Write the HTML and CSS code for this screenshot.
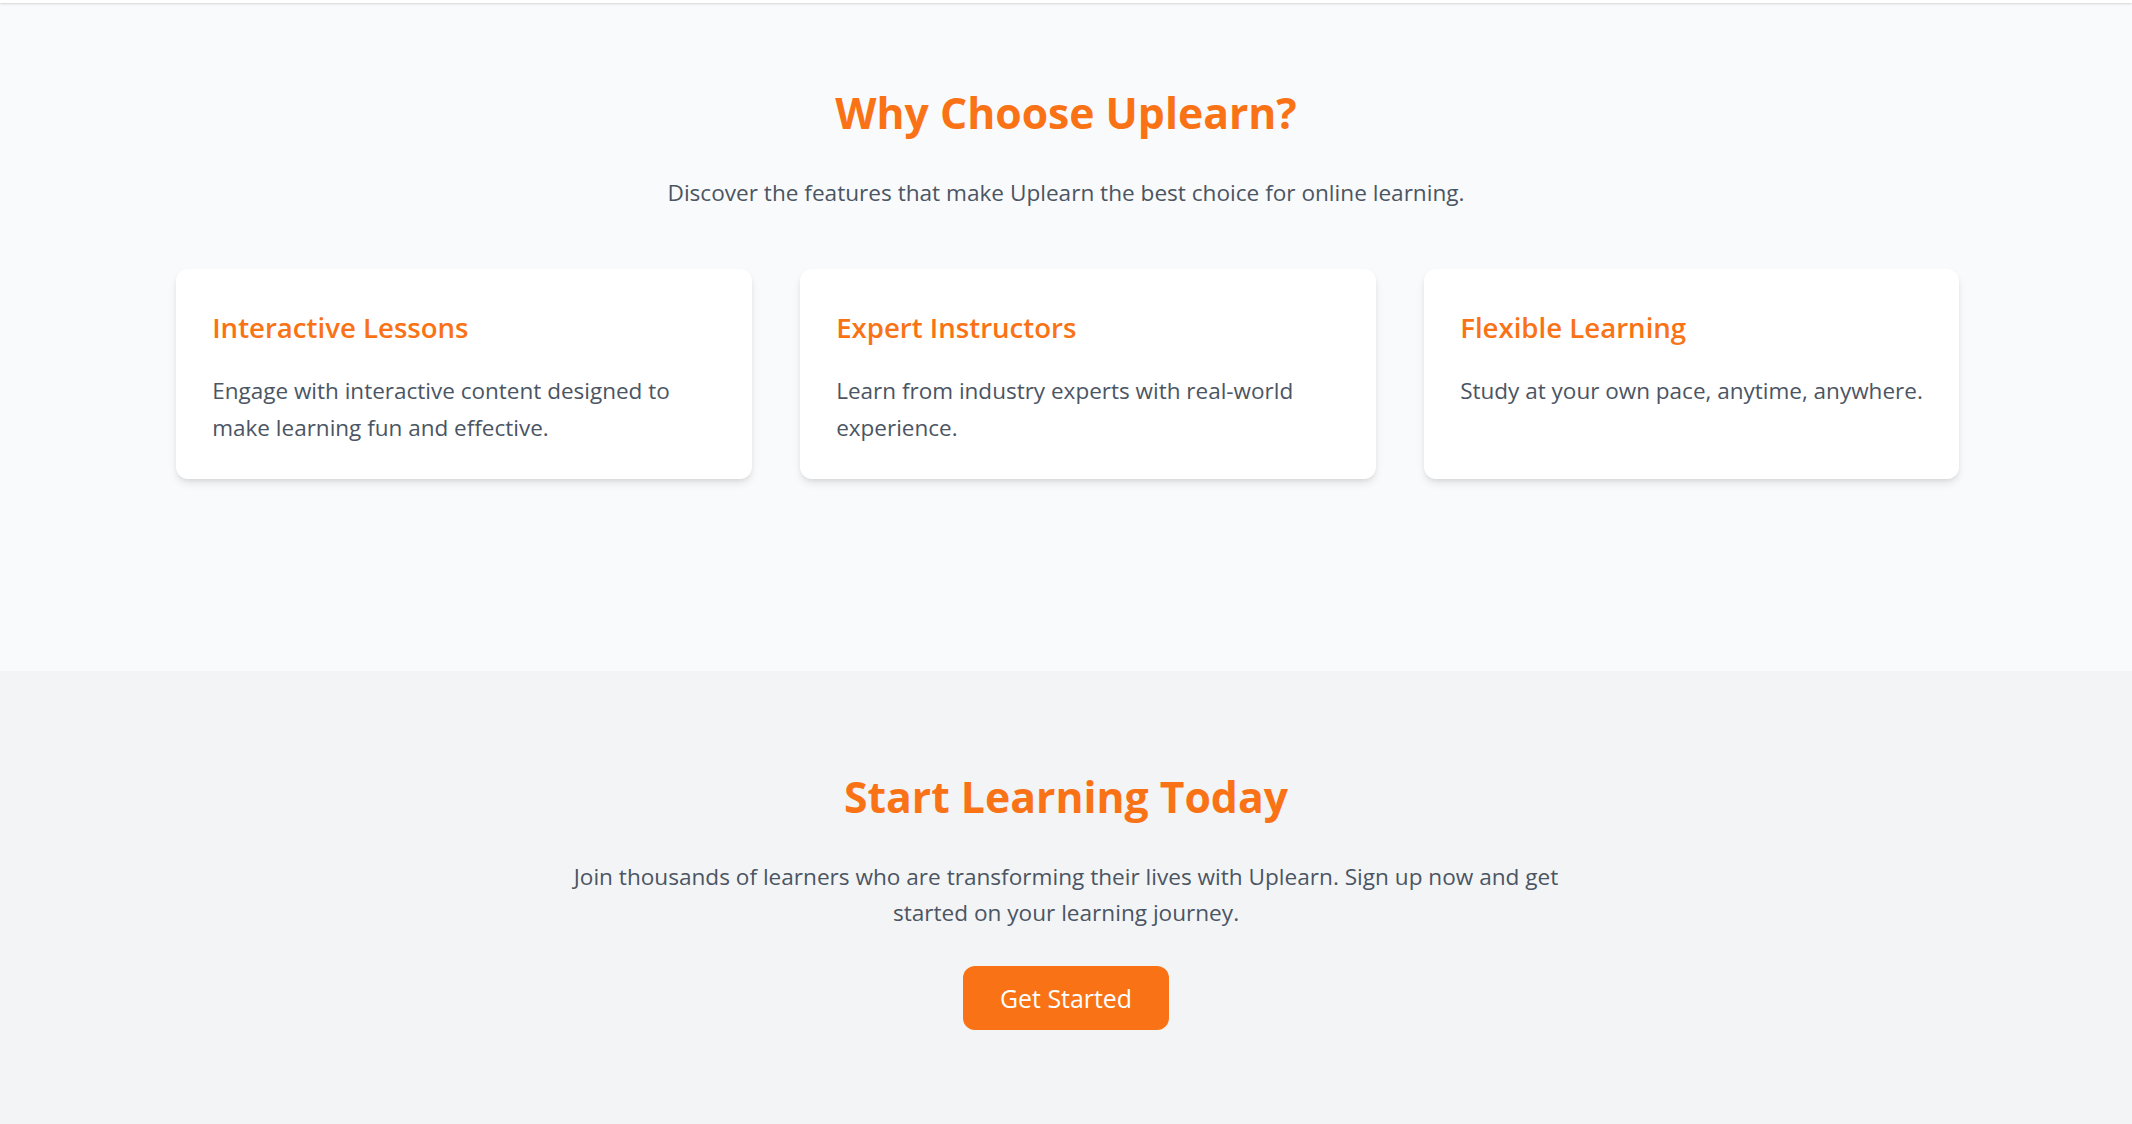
FILE: index.html
```html
<!DOCTYPE html>
<html lang="en">
<head>
<meta charset="utf-8">
<title>Uplearn</title>
<link rel="stylesheet" href="styles.css">
</head>
<body>
<header class="topbar"></header>
<main>
  <section class="features">
    <h2 class="section-title">Why Choose Uplearn?</h2>
    <p class="section-lead">Discover the features that make Uplearn the best choice for online learning.</p>
    <div class="cards">
      <article class="card">
        <h3 class="card-title">Interactive Lessons</h3>
        <p class="card-text">Engage with interactive content designed to make learning fun and effective.</p>
      </article>
      <article class="card">
        <h3 class="card-title">Expert Instructors</h3>
        <p class="card-text">Learn from industry experts with real-world experience.</p>
      </article>
      <article class="card">
        <h3 class="card-title">Flexible Learning</h3>
        <p class="card-text">Study at your own pace, anytime, anywhere.</p>
      </article>
    </div>
  </section>
  <section class="cta">
    <h2 class="section-title">Start Learning Today</h2>
    <p class="section-lead cta-lead">Join thousands of learners who are transforming their lives with Uplearn. Sign up now and get started on your learning journey.</p>
    <a class="btn" href="#">Get Started</a>
  </section>
</main>
</body>
</html>
```

FILE: styles.css
```css
* { box-sizing: border-box; }

html, body {
  margin: 0;
  padding: 0;
}

body {
  font-family: "Open Sans", "Noto Sans", sans-serif;
  color: #4b5563;
  background: #f3f4f6;
}

.topbar {
  position: relative;
  z-index: 2;
  height: 3px;
  background: #ffffff;
  box-shadow: 0 1px 3px rgba(0, 0, 0, 0.1), 0 1px 2px rgba(0, 0, 0, 0.06);
}

.features {
  background: #f9fafb;
  padding: 83px 0 0;
  height: 668px;
  display: flex;
  flex-direction: column;
  align-items: center;
}

.section-title {
  margin: 0;
  font-size: 42.7px;
  line-height: 54px;
  font-weight: 700;
  color: #f97316;
  text-align: center;
}

.section-lead {
  margin: 34.8px 0 0;
  font-size: 22.6px;
  line-height: 36.6px;
  text-align: center;
  color: #4b5563;
}

.cards {
  margin-top: 57.6px;
  padding-left: 3px;
  display: flex;
  justify-content: center;
  gap: 48px;
  width: 100%;
}

.card {
  flex: 0 1 auto;
  max-width: 576px;
  background: #ffffff;
  border-radius: 12px;
  padding: 35px 36px 32.4px;
  box-shadow: 0 5px 8px -1px rgba(0, 0, 0, 0.1), 0 2px 5px -2px rgba(0, 0, 0, 0.1);
}

.card-title {
  margin: 0 0 23px;
  font-size: 27.6px;
  line-height: 46px;
  font-weight: 600;
  color: #f97316;
}

.card-text {
  margin: 0;
  font-size: 22.5px;
  line-height: 36.6px;
  color: #4b5563;
}

.cta {
  background: #f3f4f6;
  padding: 99px 0 100px;
  display: flex;
  flex-direction: column;
  align-items: center;
}

.cta-lead {
  max-width: 1000px;
}

.btn {
  margin-top: 33.6px;
  display: inline-block;
  background: #f97316;
  color: #ffffff;
  text-decoration: none;
  font-size: 24.9px;
  line-height: 34px;
  padding: 15px 37px;
  border-radius: 12px;
}
```
